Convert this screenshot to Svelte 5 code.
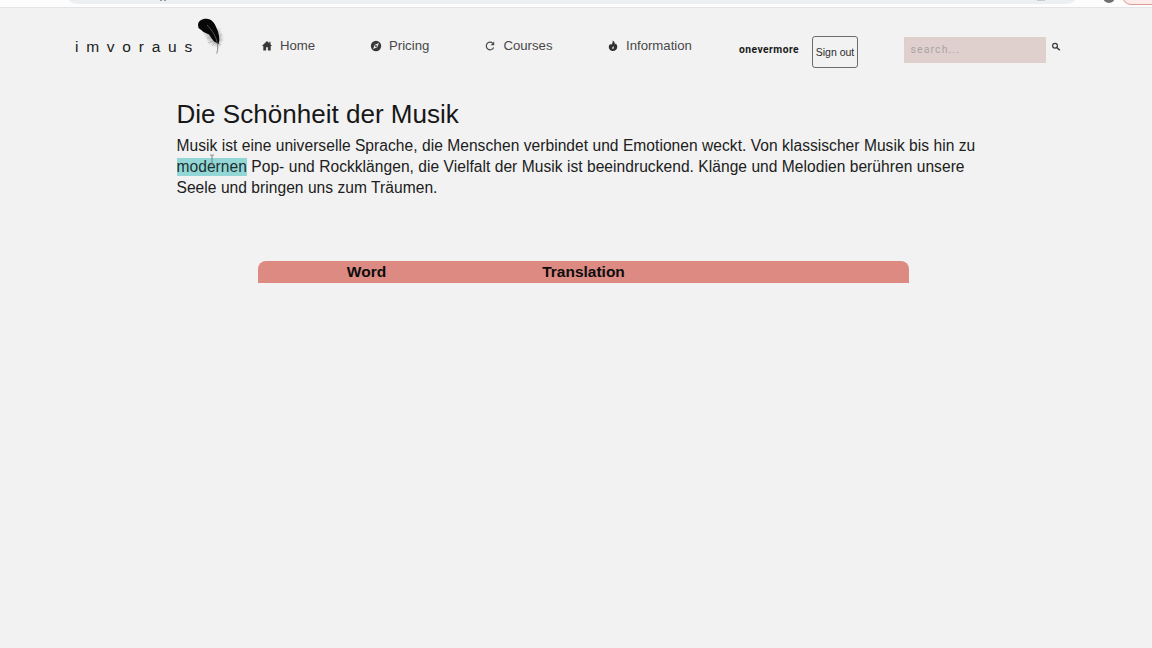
<script>
  const links = [
    { label: 'Home', icon: 'home' },
    { label: 'Pricing', icon: 'compass' },
    { label: 'Courses', icon: 'reload' },
    { label: 'Information', icon: 'fire' }
  ];
</script>

<div class="page">
  <div class="browser">
    <div class="address"><i class="tail"></i><i class="tail"></i><b></b></div>
    <span class="avatar"></span>
    <span class="update"></span>
  </div>

  <header>
    <div class="logo">
      <span>imvoraus</span>
      <svg class="feather" viewBox="0 0 34 46" width="34" height="46">
        <defs>
          <filter id="soft" x="-30%" y="-30%" width="160%" height="160%"><feGaussianBlur stdDeviation="1.6" /></filter>
        </defs>
        <path d="M12 18L27 15L30 24L27 33L18 29Z" fill="#666" opacity=".32" filter="url(#soft)" />
        <path d="M6 11C6 7 10 4.5 14.5 4.7C19.5 5 22.5 8.5 24.5 14C26.5 18 28 24 27 28.5L26.2 30.5L24.8 29L22 27.5L19 23.5L17 20.5L11.5 18L8.5 15.5L6.5 14Z" fill="#080808" />
        <path d="M15 11C20 16 24 22 25.6 30C26 34 25.5 37 24.8 39.5" fill="none" stroke="#686868" stroke-width=".75" />
        <path d="M19 24L15 24M21 27L16 29M23 29L20 32M27 23L30 20M27 26L30.5 26M26.5 29L29 31" fill="none" stroke="#999" stroke-width=".45" />
      </svg>
    </div>
    <nav>
      {#each links as link}
        <a class={link.icon} href="#top">
          <svg viewBox="0 0 12 12" width="12" height="12">
            {#if link.icon === 'home'}
              <path d="M6 1L.9 6.1h1.4V10.5h2.8V7.2h1.8v3.3h2.8V6.1h1.4L9.5 4.4V1.7H8.3v1.5Z" fill="#383838" />
            {:else if link.icon === 'compass'}
              <circle cx="6" cy="6" r="5.2" fill="#383838" />
              <path d="M9 3L7.2 7.2L3 9L4.8 4.8Z" fill="#eee" />
              <circle cx="6" cy="6" r=".9" fill="#383838" />
            {:else if link.icon === 'reload'}
              <path d="M8.8 3.3A3.8 3.8 0 1 0 9.6 7.4" fill="none" stroke="#484848" stroke-width="1.2" />
              <path d="M10.2 1.6V5.2H6.6Z" fill="#484848" />
            {:else}
              <path d="M5.5.5C8 2 8 3.4 7.8 4.6L8.8 3.5C10 4.7 10.4 6 10.2 7.5C9.9 9.7 8.1 11 6 11C3.7 11 1.9 9.5 1.8 7.3C1.7 5.6 2.6 4.6 3.4 3.8L3.9 5C5.5 4 5.9 2.2 5.5.5Z" fill="#303030" />
              <path d="M6.2 6.1C7.4 7.3 7.3 8.9 6 9C4.8 8.9 4.8 7.9 5.4 7.3Z" fill="#c8c8c8" />
            {/if}
          </svg>
          <span>{link.label}</span>
        </a>
      {/each}
    </nav>
    <strong class="user">onevermore</strong>
    <button class="signout">Sign out</button>
    <input type="text" placeholder="search..." aria-label="search" />
    <svg class="lens" viewBox="0 0 10 10" width="10" height="10">
      <circle cx="4" cy="3.7" r="2.4" fill="none" stroke="#383838" stroke-width="1.2" />
      <path d="M5.8 5.5L8.8 8.3" stroke="#383838" stroke-width="1.5" />
    </svg>
  </header>

  <main>
    <article>
      <h1>Die Schönheit der Musik</h1>
      <p>
        Musik ist eine universelle Sprache, die Menschen verbindet und Emotionen weckt. Von klassischer Musik bis hin zu<br />
        <mark>modernen<svg class="cursor" viewBox="0 0 6 12" width="6" height="12"><path d="M1 1h1.5l.5.5.5-.5H5M3 1.5v9M1 11h1.5l.5-.5.5.5H5" fill="none" stroke="#70777a" stroke-width=".9" /></svg></mark> Pop- und Rockklängen, die Vielfalt der Musik ist beeindruckend. Klänge und Melodien berühren unsere<br />
        Seele und bringen uns zum Träumen.
      </p>
    </article>
    <div class="words">
      <span>Word</span>
      <span>Translation</span>
      <span></span>
    </div>
  </main>
</div>

<style>
  :global(body) {
    margin: 0;
    background: #f2f2f2;
  }
  .page {
    height: 648px;
    overflow: hidden;
    background: #f2f2f2;
    font-family: 'Liberation Sans', Arial, sans-serif;
    color: #171717;
  }
  .browser {
    display: flex;
    align-items: flex-start;
    height: 7px;
    background: #fdfdfd;
    border-bottom: 1px solid #e2e4e6;
    overflow: hidden;
  }
  .address {
    display: flex;
    flex: none;
    width: 1006px;
    height: 4px;
    margin-left: 69px;
    background: #edf0f3;
    border-radius: 0 0 10px 10px / 0 0 4px 4px;
  }
  .tail {
    width: 2px;
    height: 1px;
    margin-right: 2px;
    background: #999;
  }
  .tail:first-child {
    margin-left: 91px;
  }
  .address b {
    width: 8px;
    height: 1px;
    margin-left: 869px;
    background: #c9cbce;
  }
  .avatar {
    width: 12px;
    height: 12px;
    margin: -9px 0 0 28px;
    flex: none;
    border-radius: 50%;
    background: #707070;
  }
  .update {
    width: 60px;
    height: 20px;
    margin: -17px 0 0 7px;
    flex: none;
    border: 1px solid #df9a94;
    border-radius: 9px;
    background: #fbecea;
  }
  header {
    display: grid;
    grid-template-columns: 186px 478px 73px 91.5px 147.5px 10px;
    align-items: start;
    height: 92px;
    padding-left: 75px;
    box-sizing: border-box;
  }
  .logo {
    display: flex;
    font-size: 15.5px;
    line-height: 18px;
    letter-spacing: 7.75px;
    color: #202020;
  }
  .logo span {
    width: 117px;
    margin-top: 30px;
  }
  .feather {
    margin-top: 6px;
    flex: none;
  }
  nav {
    display: grid;
    grid-template-columns: 109px 114.4px 122.6px 132px;
    margin-top: 29px;
  }
  nav a {
    display: flex;
    align-items: center;
    gap: 7px;
    color: #484848;
    font-size: 13.2px;
    line-height: 18px;
    text-decoration: none;
  }
  .user {
    margin-top: 35px;
    font: bold 10.3px/14px Roboto, sans-serif;
    letter-spacing: 0.45px;
    color: #1b1b1b;
  }
  .signout {
    width: 46px;
    height: 32px;
    margin-top: 28px;
    padding: 0;
    border: 1px solid #6b6b6b;
    border-radius: 3px;
    background: transparent;
    font: 10.5px 'Liberation Sans', Arial, sans-serif;
    color: #2b2b2b;
    white-space: nowrap;
  }
  input {
    width: 142px;
    height: 26px;
    margin-top: 28.5px;
    padding: 0 7px;
    box-sizing: border-box;
    border: 0;
    background: #e0d0cd;
    font: 10.6px Roboto, sans-serif;
    letter-spacing: 1.05px;
  }
  input::placeholder {
    color: #a7a4a2;
    opacity: 1;
  }
  .lens {
    margin-top: 34px;
  }
  main {
    padding-left: 176.5px;
  }
  h1 {
    margin: -1px 0 0;
    font-size: 26.05px;
    font-weight: 400;
    line-height: 30px;
  }
  p {
    margin: 7px 0 0;
    font-size: 15.57px;
    letter-spacing: 0.042px;
    line-height: 20.8px;
    white-space: nowrap;
    color: #202020;
  }
  mark {
    position: relative;
    padding-bottom: 1px;
    background: #92d7d6;
    color: #1d3031;
  }
  .cursor {
    position: absolute;
    left: 32px;
    top: -4px;
  }
  .words {
    display: grid;
    grid-template-columns: 217px 217px 217px;
    width: 651px;
    height: 22px;
    margin: 63px 0 0 81.5px;
    border-radius: 8px 8px 0 0;
    background: #dc8a82;
    color: #0d0d0d;
    font-size: 15.5px;
    font-weight: bold;
    line-height: 21px;
    text-align: center;
  }
</style>
